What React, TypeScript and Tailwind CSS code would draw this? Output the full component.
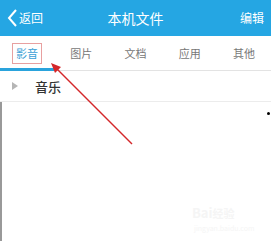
import React from 'react';

const tabs = ['影音', '图片', '文档', '应用', '其他'];

const font = { fontFamily: '"Noto Sans CJK SC", "Noto Sans", sans-serif' };

export default function App() {
  return (
    <div className="relative w-[271px] h-[241px] bg-white overflow-hidden" style={font}>
      {/* title bar */}
      <div className="h-[36px] bg-[#25a6e3] flex items-center px-[6px] text-white">
        <div className="flex items-center w-[60px]">
          <svg width="12" height="20" viewBox="0 0 12 20" className="mr-[1px]">
            <path d="M10 2 L3 10 L10 18" stroke="white" strokeWidth="2" fill="none" />
          </svg>
          <span className="text-[12px] leading-none">返回</span>
        </div>
        <div className="flex-1 text-center text-[14px] leading-none">本机文件</div>
        <div className="w-[60px] text-right text-[12px] leading-none pr-[1px]">编辑</div>
      </div>

      {/* tabs */}
      <div className="relative h-[35px] flex border-b border-[#e3e3e3]">
        {tabs.map((t, i) => (
          <div key={t} className="flex-1 flex items-center justify-center">
            <span
              className={
                i === 0
                  ? 'text-[11px] leading-none text-[#3aa0d6] border border-[#e8a0a0] px-[3px] py-[4px]'
                  : 'text-[11px] leading-none text-[#777]'
              }
            >
              {t}
            </span>
          </div>
        ))}
        <div className="absolute left-0 bottom-[-1px] w-[54px] h-[3px] bg-[#2aa3dc]" />
      </div>

      {/* list */}
      <div className="h-[31px] flex items-center border-b border-[#ececec]">
        <svg width="6" height="8" viewBox="0 0 6 8" className="ml-[12px] mr-[17px]">
          <path d="M0 0 L6 4 L0 8 Z" fill="#b5b5b5" />
        </svg>
        <span className="text-[13px] leading-none font-medium text-[#333]">音乐</span>
      </div>
      <div className="h-[139px] border-l-2 border-l-[#999] relative">
        <div className="absolute right-[1px] top-[10px] w-[3px] h-[3px] rounded-full bg-black" />
        <div className="absolute left-[190px] top-[104px] text-[13px] font-bold text-[#f5f5f5] leading-none">Bai<span className="text-[11px]">经验</span></div>
        <div className="absolute left-[192px] top-[123px] text-[7px] text-[#f5f5f5] leading-none">jingyan.baidu.com</div>
      </div>

      {/* annotation arrow */}
      <svg className="absolute left-0 top-0" width="271" height="241">
        <line x1="132" y1="144" x2="56" y2="68" stroke="#d4272a" strokeWidth="1.5" />
        <path d="M51 63 L61 67 L55 73 Z" fill="#d4272a" />
      </svg>
    </div>
  );
}
